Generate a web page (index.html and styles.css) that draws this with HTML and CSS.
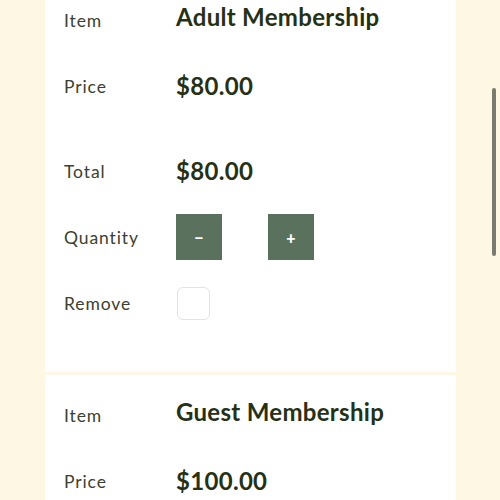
FILE: index.html
```html
<!DOCTYPE html>
<html lang="en">
<head>
  <meta charset="UTF-8" />
  <meta name="viewport" content="width=device-width, initial-scale=1.0" />
  <title>Cart</title>
  <link rel="stylesheet" href="styles.css">
</head>
<body>
  <div class="cart">
    <div class="cart-item first">
      <div class="row">
        <span class="label">Item</span>
        <span class="value name">Adult Membership</span>
      </div>
      <div class="row">
        <span class="label">Price</span>
        <span class="value">$80.00</span>
      </div>
      <div class="row total">
        <span class="label">Total</span>
        <span class="value">$80.00</span>
      </div>
      <div class="row">
        <span class="label">Quantity</span>
        <div class="qty">
          <button class="qty-btn">&minus;</button>
          <input class="qty-input" type="text" value="1">
          <button class="qty-btn">+</button>
        </div>
      </div>
      <div class="row">
        <span class="label">Remove</span>
        <input class="remove" type="checkbox">
      </div>
    </div>

    <div class="cart-item">
      <div class="row">
        <span class="label">Item</span>
        <span class="value name">Guest Membership</span>
      </div>
      <div class="row">
        <span class="label">Price</span>
        <span class="value">$100.00</span>
      </div>
    </div>
  </div>

  <div class="scrollbar"></div>
</body>
</html>
```

FILE: styles.css
```css
:root {
  --bg-color: #fef7e3;
  --card-bg: #ffffff;
  --label-color: #3b4130;
  --value-color: #263014;
  --button-bg: #5a725d;
}

body {
  background-color: var(--bg-color);
  font-family: Lato, 'Noto Sans', sans-serif;
  margin: 0;
  height: 100vh;
  overflow: hidden;
}

.cart {
  width: 411px;
  margin: -20px 0 0 45px;
  display: flex;
  flex-direction: column;
  gap: 3px;
}

.cart-item {
  background-color: var(--card-bg);
  padding: 7px 0 36px 19px;
}

.row {
  display: grid;
  grid-template-columns: 112px 1fr;
  align-items: center;
  height: 66px;
}

.row.total {
  margin-top: 19px;
}

.label {
  color: var(--label-color);
  font-size: 17.5px;
  letter-spacing: 0.9px;
}

.value {
  color: var(--value-color);
  font-size: 24px;
  font-weight: 700;
  letter-spacing: 0.3px;
  padding-bottom: 2px;
}

.value.name {
  padding-bottom: 8px;
}

.qty {
  display: flex;
}

.qty-btn {
  width: 46px;
  height: 46px;
  border: none;
  padding: 0;
  background-color: var(--button-bg);
  color: #fff;
  font-family: Lato, sans-serif;
  font-size: 16px;
  font-weight: 900;
}

.qty-input {
  width: 46px;
  height: 46px;
  border: none;
  padding: 0;
  color: transparent;
  background: transparent;
}

.remove {
  appearance: none;
  width: 33px;
  height: 33px;
  margin: 0 0 0 1px;
  border: 1.5px solid #e3e3e3;
  border-radius: 6px;
  background: #fff;
}

.scrollbar {
  position: absolute;
  top: 88px;
  left: 492px;
  width: 4px;
  height: 168px;
  border-radius: 2px;
  background-color: #7b7a70;
}
```
